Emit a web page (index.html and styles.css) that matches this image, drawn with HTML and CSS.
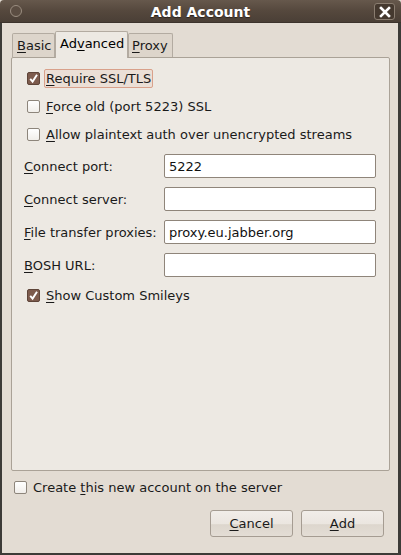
FILE: index.html
```html
<!DOCTYPE html>
<html>
<head>
<meta charset="utf-8">
<link rel="stylesheet" href="styles.css">
</head>
<body>
<div class="window">
  <div class="titlebar">
    <span class="circle"></span>
    <span class="title">Add Account</span>
    <span class="close">
      <svg width="12" height="12" viewBox="0 0 12 12"><path d="M2 2 L10 10 M10 2 L2 10" stroke="#fff" stroke-width="2.6" stroke-linecap="square"/></svg>
    </span>
  </div>
  <div class="frame">
    <div class="tabs">
      <div class="tab t-basic"><u>B</u>asic</div>
      <div class="tab active t-adv">Ad<u>v</u>anced</div>
      <div class="tab t-proxy"><u>P</u>roxy</div>
    </div>
    <div class="panel">
      <div class="checks">
        <div class="check"><span class="box checked"><svg width="11" height="11" viewBox="0 0 11 11"><path d="M2.2 5.8 L4.6 8.6 L9 1.8" fill="none" stroke="#fff" stroke-width="1.9"/></svg></span><span class="lbl focus"><u>R</u>equire SSL/TLS</span></div>
        <div class="check"><span class="box"></span><span class="lbl"><u>F</u>orce old (port 5223) SSL</span></div>
        <div class="check"><span class="box"></span><span class="lbl"><u>A</u>llow plaintext auth over unencrypted streams</span></div>
      </div>
      <div class="fields">
        <div class="field"><span class="flabel"><u>C</u>onnect port:</span><span class="entry">5222</span></div>
        <div class="field"><span class="flabel"><u>C</u>onnect server:</span><span class="entry"></span></div>
        <div class="field"><span class="flabel"><u>F</u>ile transfer proxies:</span><span class="entry">proxy.eu.jabber.org</span></div>
        <div class="field"><span class="flabel"><u>B</u>OSH URL:</span><span class="entry"></span></div>
      </div>
      <div class="check smiley"><span class="box checked"><svg width="11" height="11" viewBox="0 0 11 11"><path d="M2.2 5.8 L4.6 8.6 L9 1.8" fill="none" stroke="#fff" stroke-width="1.9"/></svg></span><span class="lbl"><u>S</u>how Custom Smileys</span></div>
    </div>
    <div class="check create"><span class="box"></span><span class="lbl">Create <u>t</u>his new account on the server</span></div>
    <div class="buttons">
      <div class="btn"><u>C</u>ancel</div>
      <div class="btn"><u>A</u>dd</div>
    </div>
  </div>
</div>
</body>
</html>
```

FILE: styles.css
```css
html, body {
  margin: 0;
  padding: 0;
  width: 401px;
  height: 555px;
  overflow: hidden;
  background: #e3dcd3;
}
.window {
  width: 401px;
  height: 555px;
  display: flex;
  flex-direction: column;
  font-family: "DejaVu Sans", sans-serif;
  font-size: 13px;
  color: #1a1a1a;
}
u { text-decoration: underline; text-underline-offset: 2px; }
.titlebar {
  height: 22px;
  flex: none;
  display: flex;
  align-items: center;
  justify-content: center;
  position: relative;
  background: linear-gradient(#66584c, #55483d 50%, #4a3f36);
  border-top-left-radius: 4px;
  border-top-right-radius: 4px;
  border-bottom: 1px solid #3c332c;
}
.circle {
  position: absolute;
  left: 10px;
  top: 5px;
  width: 10px;
  height: 10px;
  border-radius: 50%;
  border: 1px solid #9a8d80;
  background: #5b4d42;
}
.title {
  color: #fff;
  font-weight: bold;
  font-size: 14px;
  text-shadow: 0 1px 1px #2a221c;
  margin-top: 1px;
}
.close {
  position: absolute;
  right: 6px;
  top: 3px;
  width: 21px;
  height: 17px;
  box-sizing: border-box;
  border: 1px solid #8a7d70;
  border-radius: 3px;
  background: #45392f;
  display: flex;
  align-items: center;
  justify-content: center;
}
.frame {
  flex: 1;
  display: flex;
  flex-direction: column;
  border-left: 2px solid #3c3b37;
  border-right: 3px solid #3c3b37;
  border-bottom: 2px solid #3c3b37;
  padding: 9px 8px 0 9px;
  background: #e3dcd3;
}
.tabs {
  display: flex;
  align-items: flex-end;
  margin-left: 1px;
  height: 25px;
  position: relative;
  z-index: 1;
}
.tab {
  height: 24px;
  box-sizing: border-box;
  padding: 4px 0 0 4px;
  border: 1px solid #b3aba1;
  border-bottom: none;
  border-radius: 2px 2px 0 0;
  background: #ddd5cb;
  color: #1a1a1a;
}
.t-basic { width: 43px; }
.t-adv { width: 73px; }
.t-proxy { width: 45px; padding-left: 3px; }
.tab.active {
  height: 27px;
  margin-bottom: -1px;
  padding-top: 4px;
  background: #ede9e3;
  color: #000;
}
.panel {
  height: 414px;
  box-sizing: border-box;
  border: 1px solid #aaa297;
  border-radius: 2px;
  background: #ede9e3;
  padding: 10px 13px 0 12px;
  display: flex;
  flex-direction: column;
}
.checks {
  display: flex;
  flex-direction: column;
  gap: 8px;
}
.check {
  height: 20px;
  display: flex;
  align-items: center;
  padding-left: 3px;
}
.box {
  width: 13px;
  height: 13px;
  box-sizing: border-box;
  border: 1px solid #8d857b;
  border-radius: 2px;
  background: linear-gradient(#ffffff, #f1eeea);
  margin-right: 6px;
  display: flex;
  align-items: center;
  justify-content: center;
  flex: none;
}
.box.checked {
  background: #7d5b4d;
  border-color: #5e4438;
}
.lbl.focus {
  border: 1px solid #d9a18b;
  border-radius: 2px;
  background: #ebdfd6;
  padding: 1px 1px;
  margin-left: -2px;
}
.fields {
  margin-top: 10px;
  display: flex;
  flex-direction: column;
  gap: 9px;
}
.field {
  height: 24px;
  display: flex;
  align-items: center;
}
.flabel {
  width: 140px;
  flex: none;
}
.entry {
  width: 212px;
  height: 24px;
  box-sizing: border-box;
  border: 1px solid #8f857a;
  border-radius: 2px;
  background: #fff;
  padding-left: 4px;
  display: flex;
  align-items: center;
  color: #111;
}
.smiley {
  margin-top: 8px;
}
.create {
  margin-top: 6px;
  padding-left: 3px;
  height: 20px;
}
.buttons {
  display: flex;
  justify-content: flex-end;
  gap: 8px;
  margin-top: 13px;
  padding-right: 6px;
}
.btn {
  width: 83px;
  height: 27px;
  box-sizing: border-box;
  border: 1px solid #a59c92;
  border-radius: 3px;
  background: linear-gradient(#f1ede9, #ebe6e0 50%, #ddd6cd 55%, #e3ddd5);
  display: flex;
  align-items: center;
  justify-content: center;
  color: #1a1a1a;
}
```
